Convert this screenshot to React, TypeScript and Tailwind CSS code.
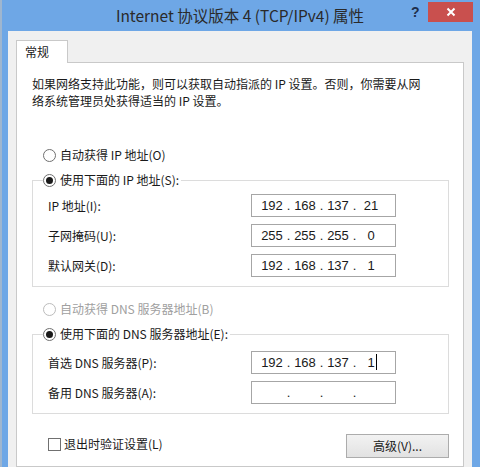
import React from "react";

const CJK = { fontFamily: '"Noto Sans CJK SC", "Noto Sans", sans-serif' };

function Radio({ checked, disabled }: { checked?: boolean; disabled?: boolean }) {
  return (
    <span
      className={`flex items-center justify-center w-[13px] h-[13px] rounded-full border bg-white shrink-0 ${
        disabled ? "border-[#bcbcbc] bg-[#f4f4f4]" : "border-[#707070]"
      }`}
    >
      {checked && <span className="w-[7px] h-[7px] rounded-full bg-[#1a1a1a]" />}
    </span>
  );
}

function IpField({ octets, caret }: { octets: string[]; caret?: boolean }) {
  return (
    <div
      className="flex items-center w-[145px] h-[23px] border border-[#a6a6a6] bg-white pl-[7px] text-[13px] text-[#1a1a1a]"
      style={{ fontFamily: '"Liberation Sans", "Noto Sans", sans-serif' }}
    >
      {octets.map((o, i) => (
        <React.Fragment key={i}>
          <span className="w-[26px] text-center leading-none relative">
            {o}
            {caret && i === 3 && (
              <span className="absolute right-[7px] top-[-2px] w-[1px] h-[16px] bg-black" />
            )}
          </span>
          {i < 3 && <span className="w-[7px] text-center leading-none">.</span>}
        </React.Fragment>
      ))}
    </div>
  );
}

function Row({ label, octets, caret }: { label: string; octets: string[]; caret?: boolean }) {
  return (
    <div className="grid grid-cols-[203px_145px] items-center h-[23px]">
      <span className="text-[12px] leading-none">{label}</span>
      <IpField octets={octets} caret={caret} />
    </div>
  );
}

export default function App() {
  return (
    <div
      className="w-[480px] h-[467px] overflow-hidden flex bg-[#6ea7e6] text-[#1a1a1a]"
      style={CJK}
    >
      <div className="w-[2px] bg-[#9fb6cf]" />
      <div className="flex-1 flex flex-col">
        {/* title bar */}
        <div className="relative h-[31px] flex items-center justify-center">
          <span className="text-[15.5px] text-[#2a2a2a] pr-[2px]">
            Internet 协议版本 4 (TCP/IPv4) 属性
          </span>
          <span
            className="absolute left-[409px] top-[2px] text-[14px] font-bold text-[#1e2e4a]"
            style={{ fontFamily: '"Liberation Sans", sans-serif' }}
          >
            ?
          </span>
          <div className="absolute left-[426px] top-[2px] w-[45px] h-[20px] bg-[#c9504e] flex items-center justify-center">
            <svg width="10" height="10" viewBox="0 0 10 10">
              <path d="M1.5 1.5 L8.5 8.5 M8.5 1.5 L1.5 8.5" stroke="#fff" strokeWidth="2" />
            </svg>
          </div>
        </div>
        {/* body */}
        <div className="ml-[6px] mr-[8px] flex-1 bg-[#f0f0f0] pt-[9px] pl-[8px] pr-[8px] flex flex-col">
          <div className="flex">
            <div className="w-[52px] h-[23px] bg-white border border-b-0 border-[#c9c9c9] text-[12px] pl-[8px] flex items-center mb-[-1px] relative z-10">
              常规
            </div>
          </div>
          <div className="flex-1 bg-white border border-[#c9c9c9] pl-[15px] pr-[14px] pt-[12px] flex flex-col">
            <p className="text-[12px] leading-[17px]">
              如果网络支持此功能，则可以获取自动指派的 IP 设置。否则，你需要从网
              <br />
              络系统管理员处获得适当的 IP 设置。
            </p>
            <div className="mt-[37px] ml-[11px] flex items-center gap-[4px] h-[18px] text-[12px]">
              <Radio />
              <span>自动获得 IP 地址(O)</span>
            </div>
            <fieldset className="mt-[7px] border border-[#dcdcdc] pl-[10px] pb-[9px]">
              <legend className="flex items-center gap-[4px] h-[18px] text-[12px] bg-white pr-[2px]">
                <Radio checked />
                <span>使用下面的 IP 地址(S):</span>
              </legend>
              <div className="flex flex-col gap-[7px] pl-[5px] mt-[5px]">
                <Row label="IP 地址(I):" octets={["192", "168", "137", "21"]} />
                <Row label="子网掩码(U):" octets={["255", "255", "255", "0"]} />
                <Row label="默认网关(D):" octets={["192", "168", "137", "1"]} />
              </div>
            </fieldset>
            <div className="mt-[13px] ml-[11px] flex items-center gap-[4px] h-[18px] text-[12px] text-[#a0a0a0]">
              <Radio disabled />
              <span>自动获得 DNS 服务器地址(B)</span>
            </div>
            <fieldset className="mt-[7px] border border-[#dcdcdc] pl-[10px] pb-[9px]">
              <legend className="flex items-center gap-[4px] h-[18px] text-[12px] bg-white pr-[2px]">
                <Radio checked />
                <span>使用下面的 DNS 服务器地址(E):</span>
              </legend>
              <div className="flex flex-col gap-[7px] pl-[5px] mt-[8px]">
                <Row label="首选 DNS 服务器(P):" octets={["192", "168", "137", "1"]} caret />
                <Row label="备用 DNS 服务器(A):" octets={["", "", "", ""]} />
              </div>
            </fieldset>
            <div className="mt-[20px] flex items-start justify-between pl-[16px]">
              <div className="flex items-center gap-[3px] mt-[1px] text-[12px]">
                <span className="w-[13px] h-[13px] border border-[#707070] bg-white" />
                <span>退出时验证设置(L)</span>
              </div>
              <div className="w-[103px] h-[24px] border border-[#acacac] bg-gradient-to-b from-[#f2f2f2] to-[#e2e2e2] flex items-center justify-center text-[12px]">
                高级(V)...
              </div>
            </div>
          </div>
        </div>
      </div>
    </div>
  );
}
